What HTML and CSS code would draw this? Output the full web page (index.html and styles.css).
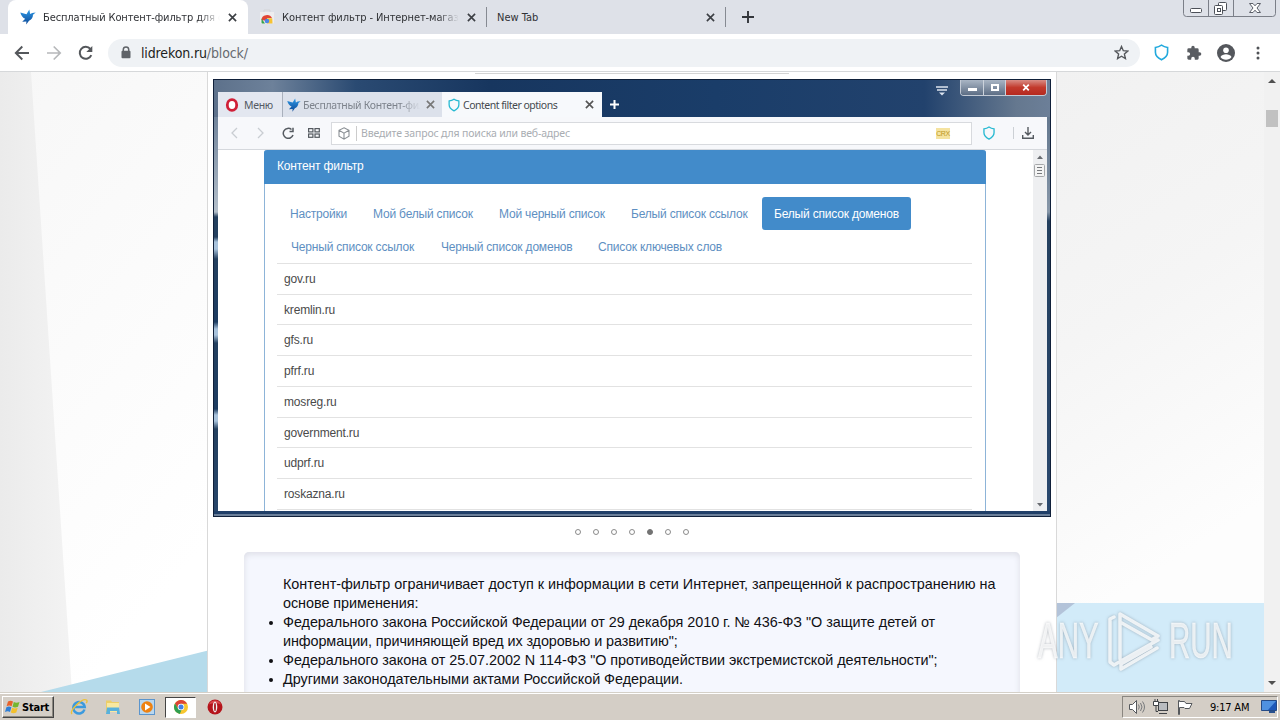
FILE: index.html
```
<!DOCTYPE html>
<html lang="ru">
<head>
<meta charset="utf-8">
<title>Бесплатный Контент-фильтр</title>
<link rel="stylesheet" href="styles.css">
</head>
<body>
<svg class="defs" width="0" height="0">
  <defs>
    <linearGradient id="birdg" x1="0" y1="0" x2="0" y2="1"><stop offset="0" stop-color="#2f9be8"/><stop offset="1" stop-color="#0b4796"/></linearGradient>
    <symbol id="bird" viewBox="0 0 16 16"><path fill="url(#birdg)" d="M.3 3.400 6.500 5.200 9.300.5l.9 4.500 2-1 3.500-.4-2.700 2.200c0 3-1.600 5-4 6L6.200 15.600l.2-3-4.200.2 3-3C3 8.800 1.200 6.600.3 3.400z"/></symbol>
    <symbol id="shield" viewBox="0 0 16 18"><path d="M8 1.200C6 2.600 4 3.300 1.500 3.600v5.200c0 3.700 2.800 6.200 6.500 8 3.700-1.800 6.500-4.300 6.500-8V3.600C12 3.300 10 2.600 8 1.200z" fill="none" stroke="currentColor" stroke-width="1.700"/></symbol>
    <symbol id="x" viewBox="0 0 10 10"><path d="M1 1 9 9M9 1 1 9" stroke="currentColor" stroke-width="1.800" fill="none"/></symbol>
    <symbol id="reload" viewBox="0 0 16 16"><path d="M13.300 10.200A6 6 0 1 1 12.400 4" fill="none" stroke="currentColor" stroke-width="2"/><path d="M14.300 1v6H8.300z" fill="currentColor"/></symbol>
  </defs>
</svg>

<header class="tabstrip">
  <div class="tab active">
    <svg class="fav" width="16" height="16"><use href="#bird"/></svg>
    <span class="tab-title t1">Бесплатный Контент-фильтр для с</span>
    <svg class="close" width="9" height="9"><use href="#x"/></svg>
  </div>
  <div class="tab second">
    <svg class="fav" width="16" height="16" viewBox="0 0 16 16"><path d="M5 3V1h6v2" fill="none" stroke="#d5d5d8"/><path d="M1 3h14v10.500a1 1 0 0 1-1 1H2a1 1 0 0 1-1-1z" fill="#eeedef"/><path d="M2.500 11A5.500 5 0 0 1 13 9H8v3z" fill="#e24535"/><path d="M2.500 9.500 6 14.500H3.500a1 1 0 0 1-1-1z" fill="#37a24c"/><path d="M8 9.200h5.200l.3 5.300H8z" fill="#f6c333"/><circle cx="8" cy="12" r="2.300" fill="#4c86e8"/></svg>
    <span class="tab-title t2">Контент фильтр - Интернет-магаз</span>
    <svg class="close" width="9" height="9"><use href="#x"/></svg>
  </div>
  <div class="tab third">
    <span class="tab-title t3">New Tab</span>
    <svg class="close" width="9" height="9"><use href="#x"/></svg>
  </div>
  <svg class="newtab" width="12" height="12" viewBox="0 0 12 12"><path d="M6 0v12M0 6h12" stroke="#33363b" stroke-width="1.900"/></svg>
  <svg class="winctl" width="94" height="18" viewBox="0 0 94 18" fill="none" stroke="#7b7f88">
    <path d="M.5 0v13.500a3 3 0 0 0 3 3h86a3 3 0 0 0 3-3V0M25.500 0v16M50.500 0v16"/>
    <rect x="7.500" y="8.500" width="11" height="4" rx="1" fill="#fff" stroke="#4c5058"/>
    <rect x="35.500" y="2.500" width="8" height="8" rx="1" fill="#fff" stroke="#4c5058"/><rect x="31.500" y="5.500" width="8" height="9" rx="1" fill="#fff" stroke="#4c5058"/><rect x="34.500" y="8.500" width="3" height="3" stroke="#4c5058"/>
    <path d="M66.500 3.500h3.500l2 2.300 2-2.300h3.500L74 8l3.500 4.500H74l-2-2.300-2 2.300h-3.500L70 8z" fill="#fff" stroke="#5b5f68"/>
  </svg>
</header>

<div class="toolbar">
  <svg class="nav-ic" width="16" height="16" viewBox="0 0 16 16" fill="none" stroke="#54575b" stroke-width="1.900"><path d="M15 8H2M8.300 1.500 1.800 8l6.500 6.500"/></svg>
  <svg class="nav-ic" width="16" height="16" viewBox="0 0 16 16" fill="none" stroke="#b6b8ba" stroke-width="1.700"><path d="M1 8h13M7.700 1.500 14.200 8l-6.500 6.500"/></svg>
  <svg class="nav-ic reload" width="16" height="16"><use href="#reload"/></svg>
  <div class="omnibox">
    <svg width="10" height="13" viewBox="0 0 10 13"><path d="M2.300 5.500V3.600a2.700 2.700 0 0 1 5.400 0v1.900" fill="none" stroke="#5f6368" stroke-width="1.500"/><rect x=".5" y="4.700" width="9" height="7.500" rx="1" fill="#5f6368"/></svg>
    <span class="url">lidrekon.ru<span>/block/</span></span>
    <svg class="star" width="15" height="15" viewBox="0 0 15 15"><path d="m7.500 1.500 1.800 4.200 4.500.4-3.400 3 1 4.400-3.900-2.300-3.900 2.300 1-4.400-3.400-3 4.500-.4z" fill="none" stroke="#54575b" stroke-width="1.400"/></svg>
  </div>
  <svg class="shield" width="15" height="17"><use href="#shield"/></svg>
  <svg class="puzzle" width="16" height="16" viewBox="0 0 24 24"><path fill="#5a5d62" d="M20.500 11H19V7a2 2 0 0 0-2-2h-4V3.500a2.500 2.500 0 0 0-5 0V5H4a2 2 0 0 0-2 2v3.800h1.500a2.700 2.700 0 0 1 0 5.400H2V20c0 1.100.9 2 2 2h3.800v-1.500a2.700 2.700 0 0 1 5.400 0V22H17a2 2 0 0 0 2-2v-4h1.500a2.500 2.500 0 0 0 0-5z"/></svg>
  <svg class="avatar" width="18" height="18" viewBox="0 0 18 18"><circle cx="9" cy="9" r="9" fill="#54575c"/><circle cx="9" cy="6.200" r="2.800" fill="#fff"/><path d="M3.500 13c.6-2 3.500-2.800 5.500-2.800s4.900.8 5.500 2.800c-1.200 1.700-3.200 2.700-5.500 2.700S4.700 14.700 3.500 13z" fill="#fff"/></svg>
  <svg class="dots" width="4" height="14" viewBox="0 0 4 14" fill="#4f5256"><circle cx="2" cy="2" r="1.500"/><circle cx="2" cy="7" r="1.500"/><circle cx="2" cy="12" r="1.500"/></svg>
</div>

<main class="viewport">
  <div class="page">
    <svg class="backdrop" width="1264" height="620" viewBox="0 72 1264 620">
      <defs>
        <linearGradient id="lg" x1="0" y1="0" x2=".4" y2="1"><stop offset="0" stop-color="#f7f7f7"/><stop offset="1" stop-color="#fff"/></linearGradient>
        <linearGradient id="gg" x1="0" y1="0" x2="1" y2="0"><stop offset="0" stop-color="#ebebeb"/><stop offset="1" stop-color="#f3f3f3"/></linearGradient>
        <linearGradient id="rg" x1="0" y1="0" x2=".25" y2="1"><stop offset="0" stop-color="#f1f1f1"/><stop offset=".5" stop-color="#f5f5f5"/><stop offset="1" stop-color="#fdfdfd"/></linearGradient>
      </defs>
      <path d="M0 72h208v620H0z" fill="url(#lg)"/>
      <path d="M0 72h31l41 620H0z" fill="url(#gg)"/>
      <path d="M41 692 208 650.500V692z" fill="#b5dbeb"/>
      <path d="M1056 72h208v531h-208z" fill="url(#rg)"/>
      <path d="M1056 603h208v89h-208z" fill="#d2ebf9"/>
      <path d="M1056 603h19l-19 15z" fill="#b3c3d9"/>
    </svg>

    <div class="column">
      <div class="topline"></div>
      <section class="slide">
        <div class="o-tabs">
          <div class="o-menu"><svg width="14" height="14" viewBox="0 0 14 14"><ellipse cx="7" cy="7" rx="4.700" ry="5.400" fill="#fff" stroke="#d01f37" stroke-width="2.800"/></svg><span>Меню</span></div>
          <div class="o-tab dim"><svg width="14" height="14"><use href="#bird"/></svg><span class="fadeout">Бесплатный Контент-фил</span><svg class="ox" width="9" height="9"><use href="#x"/></svg></div>
          <div class="o-tab cur"><svg class="teal" width="12" height="14"><use href="#shield"/></svg><span>Content filter options</span><svg class="ox" width="9" height="9"><use href="#x"/></svg></div>
          <svg class="oplus" width="9" height="9" viewBox="0 0 9 9"><path d="M4.500 0v9M0 4.500h9" stroke="#fff" stroke-width="2"/></svg>
          <svg class="omore" width="12" height="10" viewBox="0 0 12 10"><path d="M0 1h12M1 4h10" stroke="#dbe3ee" stroke-width="1.500"/><path d="M3 6.500h6L6 9.500z" fill="#dbe3ee"/></svg>
          <div class="o-win"><i class="w1"></i><i class="w2"></i><i class="w3"><svg width="8" height="7" viewBox="0 0 10 10"><path d="M1 1 9 9M9 1 1 9" stroke="#fff" stroke-width="2.500"/></svg></i></div>
        </div>
        <div class="o-bar">
          <svg width="7" height="12" viewBox="0 0 7 12" fill="none" stroke="#c9cdd2" stroke-width="1.300"><path d="M6 1 1 6l5 5"/></svg>
          <svg class="fw" width="7" height="12" viewBox="0 0 7 12" fill="none" stroke="#c9cdd2" stroke-width="1.300"><path d="m1 1 5 5-5 5"/></svg>
          <svg class="rl" width="12" height="12" viewBox="0 0 12 12" fill="none" stroke="#555a60" stroke-width="1.500"><path d="M11 8A5 5 0 1 1 9.500 2.500"/><path d="M11 .8v3.700H7.500" /></svg>
          <svg class="grid" width="12" height="10" viewBox="0 0 12 10" fill="none" stroke="#555a60" stroke-width="1.200"><rect x=".6" y=".6" width="4.300" height="3.300"/><rect x="7" y=".6" width="4.300" height="3.300"/><rect x=".6" y="6" width="4.300" height="3.300"/><rect x="7" y="6" width="4.300" height="3.300"/></svg>
          <div class="o-input">
            <svg width="12" height="13" viewBox="0 0 12 13" fill="none" stroke="#8b9095" stroke-width="1.100"><path d="m6 .8 5 2.500v6L6 12.200 1 9.300v-6zM1 3.300l5 2.900 5-2.900M6 6.200v6"/></svg>
            <span>Введите запрос для поиска или веб-адрес</span>
            <b>CRX</b>
          </div>
          <svg class="teal osh" width="14" height="14"><use href="#shield"/></svg>
          <i class="sep"></i>
          <svg class="dl" width="12" height="12" viewBox="0 0 12 12" fill="none" stroke="#555a60" stroke-width="1.400"><path d="M6 0v7.500M3 5l3 3 3-3M.7 8v3.200h10.600V8"/></svg>
        </div>
        <div class="o-page">
          <div class="panel">
            <div class="panel-head">Контент фильтр</div>
            <nav>
              <span class="n1">Настройки</span><span class="n2">Мой белый список</span><span class="n3">Мой черный список</span><span class="n4">Белый список ссылок</span><span class="n5 on">Белый список доменов</span>
            </nav>
            <nav class="row2">
              <span class="n6">Черный список ссылок</span><span class="n7">Черный список доменов</span><span class="n8">Список ключевых слов</span>
            </nav>
            <ul class="domains">
              <li>gov.ru</li><li>kremlin.ru</li><li>gfs.ru</li><li>pfrf.ru</li><li>mosreg.ru</li><li>government.ru</li><li>udprf.ru</li><li>roskazna.ru</li><li></li>
            </ul>
          </div>
          <div class="o-scroll">
            <svg width="14" height="361" viewBox="0 0 14 361"><path d="M4 9h6L7 5.500zM4 353h6l-3 3.500z" fill="#6a6d72"/><rect x="1.500" y="14.500" width="10" height="12" rx="1" fill="#f4f4f4" stroke="#a6a8aa"/><path d="M4 17.500h5M4 20.500h5M4 23.500h5" stroke="#77797c"/></svg>
          </div>
        </div>
      </section>
      <div class="pager"><i></i><i></i><i></i><i></i><i class="on"></i><i></i><i></i></div>
      <section class="info">
        <p class="l1">Контент-фильтр ограничивает доступ к информации в сети Интернет, запрещенной к распространению на</p>
        <p class="l2">основе применения:</p>
        <p class="l3 li">Федерального закона Российской Федерации от 29 декабря 2010 г. № 436-ФЗ "О защите детей от</p>
        <p class="l4">информации, причиняющей вред их здоровью и развитию";</p>
        <p class="l5 li">Федерального закона от 25.07.2002 N 114-ФЗ "О противодействии экстремистской деятельности";</p>
        <p class="l6 li">Другими законодательными актами Российской Федерации.</p>
      </section>
    </div>

    <div class="watermark">
      <span>ANY</span>
      <svg width="56" height="64" viewBox="0 0 56 64" fill="none" stroke="#fff" stroke-opacity=".8" stroke-width="3.500" stroke-linejoin="round" stroke-linecap="round"><path d="M13 50V5l38 22-5 3M13 13l32 18M7 8 3 10v43l4 3 44-25M14 60l36-21M14 60v-5l30-17"/></svg>
      <span>RUN</span>
    </div>
  </div>
  <div class="scrollbar"><i class="up"></i><i class="thumb"></i><i class="down"></i></div>
</main>

<footer class="taskbar">
  <div class="start">
    <svg width="16" height="16" viewBox="0 0 16 16"><path d="M3 2.500C5 1.200 6.500 1.500 8 2.500L6.600 7.300C5 6.300 3.500 6.300 1.600 7.300z" fill="#e8622a"/><path d="M8.800 3c1.800 1 3.500 1 5.700 0L13 7.800c-2 1-3.700 1-5.500 0z" fill="#75b62f"/><path d="M1.400 8.200c2-1 3.500-.8 5 .1L5 13C3.500 12 2 12 0 13z" fill="#2f7fd6"/><path d="M7.200 8.800c1.800 1 3.500 1 5.500 0l-1.400 4.800c-2 1-3.700 1-5.500 0z" fill="#f3c02c"/></svg>
    <span>Start</span>
  </div>
  <div class="apps">
    <svg width="18" height="18" viewBox="0 0 18 18"><path d="M14.500 11.500A5.700 5.700 0 1 1 14.700 9H5" fill="none" stroke="#3b9ade" stroke-width="2.500"/><path d="M2 16C-1 13 12-.5 16.500 2c.8.600.4 2.200-.3 3.200" fill="none" stroke="#ecc138" stroke-width="1.400"/></svg>
    <svg width="18" height="18" viewBox="0 0 18 18"><path d="M2 2.500h5l1 1.500h7v10H2z" fill="#ecce68"/><path d="M3 5h12v9H3z" fill="#f8e8a0"/><path d="M3 9.500h12l1 6.500h-3v-3H6v3H2z" fill="#58b1dc"/></svg>
    <svg width="18" height="18" viewBox="0 0 18 18"><rect x="1.500" y="1.500" width="15" height="15" fill="#b9d7ef" stroke="#5b95cd"/><circle cx="9" cy="9" r="5.800" fill="#ee8212"/><path d="m7 5.500 5.500 3.500L7 12.500z" fill="#fff"/></svg>
    <div class="chrome"><svg width="14" height="14" viewBox="0 0 14 14"><circle cx="7" cy="7" r="7" fill="#f7c62f"/><path d="M1 3.500A7 7 0 0 1 13.100 3.700H7L4 8.500z" fill="#dd4336"/><path d="M1 3.400 4.300 9 7.500 10 5.800 13.900A7 7 0 0 1 1 3.400z" fill="#2f9e51"/><circle cx="7" cy="7" r="3.300" fill="#fff"/><circle cx="7" cy="7" r="2.500" fill="#437fe6"/></svg></div>
    <svg class="opera" width="16" height="16" viewBox="0 0 16 16"><circle cx="8" cy="8" r="7.500" fill="#b5141b"/><path d="M2 5.500A6.500 6.500 0 0 1 14 5.500C11 3.800 5 3.800 2 5.500z" fill="#d9484d"/><ellipse cx="8" cy="8" rx="2.300" ry="5.400" fill="#f2f2f2"/><ellipse cx="8" cy="8" rx=".9" ry="4.200" fill="#a30f15"/></svg>
  </div>
  <div class="tray">
    <svg width="16" height="14" viewBox="0 0 16 14" fill="none" stroke="#55585c"><path d="M.5 4.500h3l4-4v13l-4-4h-3z" fill="#fff"/><path d="M9.500 4.500q1.500 2.500 0 5M11.500 3q3 4 0 8M13.500 1.500q4 5.500 0 11" stroke="#77797c"/></svg>
    <svg width="16" height="16" viewBox="0 0 16 16" fill="none" stroke="#3f4246"><rect x="5.500" y="3.500" width="9" height="8" fill="#b9bcc0"/><path d="M.5 2.500h5v4h-5z" fill="#fff"/><path d="M2 0v2M4.500 0v2M3 6.500v6h2M6 14.500h8"/></svg>
    <svg width="16" height="15" viewBox="0 0 16 15" fill="#fff" stroke="#55585c"><path d="M1.500 14.500v-14h1v1h5l1.500 2h6l-2.500 5H8l-1-1H2.500v7z"/></svg>
    <span>9:17 AM</span>
    <svg width="16" height="14" viewBox="0 0 16 14"><path d="M.5.500h15v10H.5z" fill="#1d58b9" stroke="#254b86"/><path d="M1 1h14L7 10H1z" fill="#4f91e0"/><path d="M8 11h6v2H8z" fill="#27508e"/></svg>
  </div>
</footer>
</body>
</html>
```
FILE: styles.css
```
* { box-sizing: border-box; }
body {
  margin: 0; width: 1280px; height: 720px; overflow: hidden;
  display: flex; flex-direction: column; background: #fff;
  font-family: "DejaVu Sans Condensed", "DejaVu Sans", sans-serif; color: #222;
}
svg { display: block; flex: none; }
.defs { position: absolute; }
p, ul { margin: 0; padding: 0; }
span { white-space: nowrap; }

/* tab strip */
.tabstrip { height: 34px; background: #dee1e8; display: flex; position: relative; padding-left: 8px; flex: none; }
.tab { display: flex; align-items: center; height: 34px; font-size: 11px; }
.tab.active { width: 240px; background: #fff; border-radius: 8px 8px 0 0; padding-left: 12px; }
.tab.second { width: 238px; padding-left: 11px; }
.tab.third { width: 240px; padding-left: 10px; border-left: 1px solid #868a92; border-right: 1px solid #868a92; height: 20px; margin-top: 7px; }
.fav { margin-right: 7px; }
.tab-title { color: #303236; flex: none; }
.t1, .t2 { width: 177px; -webkit-mask-image: linear-gradient(90deg, #000 88%, transparent); mask-image: linear-gradient(90deg, #000 88%, transparent); }
.t1 { letter-spacing: -.12px; }
.t2 { letter-spacing: -.1px; }
.t3 { width: 209px; }
.close { color: #3c3f44; margin-left: 8px; }
.t3 + .close { margin-left: 0; }
.newtab { margin: 11px 0 0 16px; }
.winctl { position: absolute; right: 3px; top: 0; }

/* toolbar */
.toolbar { height: 38px; flex: none; display: flex; align-items: center; padding-left: 14px; border-bottom: 1px solid #d6d8da; }
.nav-ic { margin-right: 16px; }
.reload { color: #54575b; margin-right: 14px; }
.omnibox { width: 1032px; height: 28px; border-radius: 14px; background: #eff2f5; display: flex; align-items: center; padding: 0 11px 0 13px; }
.url { font: 14px "DejaVu Sans Condensed", sans-serif; letter-spacing: -.13px; margin-left: 10px; color: #1c1e21; }
.url span { color: #666a6f; }
.star { margin-left: auto; }
.shield { color: #22a9dd; margin-left: 14px; }
.puzzle { margin-left: 17px; }
.avatar { margin-left: 15px; }
.dots { margin-left: 21px; }

/* viewport */
.viewport { height: 620px; flex: none; display: flex; overflow: hidden; }
.page { width: 1264px; position: relative; overflow: hidden; display: flex; justify-content: center; }
.backdrop { position: absolute; left: 0; top: 0; }
.column { position: relative; width: 850px; height: 620px; background: #fff; border: solid #d9d9d9; border-width: 0 1px; display: flex; flex-direction: column; align-items: center; }
.topline { width: 314px; height: 2px; border-bottom: 1px solid #d4d4d4; margin-bottom: 5px; flex: none; }
.scrollbar { width: 16px; background: #f1f1f1; display: flex; flex-direction: column; align-items: center; }
.up { border: 4px solid transparent; border-bottom-color: #505050; border-top: 0; margin-top: 7px; }
.thumb { width: 12px; height: 17px; background: #c1c1c1; margin-top: 27px; }
.down { border: 4px solid transparent; border-top-color: #505050; border-bottom: 0; margin-top: auto; margin-bottom: 7px; }

/* slide: nested browser window */
.slide {
  width: 838px; height: 438px; flex: none; overflow: hidden; border: 1px solid #10203a;
  padding: 0 3px 5px 4px; display: flex; flex-direction: column;
  background:
    linear-gradient(90deg, #5d718b 0, #6d819a 7%, #2a4a72 17%, #17365f 33%, #1a3d69 60%, #22426d 85%, #65788f 96%, #6c7f98) 0 0 / 100% 37px no-repeat,
    linear-gradient(#203f68 0 3px, #6b7f99 3px) 0 100% / 100% 5px no-repeat,
    linear-gradient(#71849b 0, #b4bfca 95px, #24405f 100px, #24405f 120px, #a9c3dc 125px, #a9c3dc 132px, #24405f 142px, #1d3c61 205px, #a9c3dc 212px, #a9c3dc 218px, #24405f 226px, #1d3c61 292px, #a9c3dc 298px, #a9c3dc 304px, #24405f 312px, #29486f) 0 37px / 4px 100% no-repeat,
    linear-gradient(#64788f 0, #8696a8 95px, #24405f 104px, #29486f) 100% 37px / 3px 100% no-repeat;
  font-family: "Noto Sans", "Open Sans", sans-serif;
}
.o-tabs { height: 37px; flex: none; display: flex; align-items: flex-end; font-size: 10.500px; color: #555b64; }
.o-menu { width: 64px; height: 25px; background: #e3e7f0; display: flex; align-items: center; padding-left: 7px; gap: 5px; letter-spacing: -.3px; }
.o-tab { height: 25px; display: flex; align-items: center; padding-left: 4px; gap: 2px; letter-spacing: -.4px; }
.dim { width: 160px; background: #dce1eb; border-left: 1px solid #a9b0bc; color: #7d838c; }
.fadeout { width: 121px; letter-spacing: -.32px; -webkit-mask-image: linear-gradient(90deg, #000 80%, transparent 97%); mask-image: linear-gradient(90deg, #000 80%, transparent 97%); }
.cur { width: 160px; background: #f7f9fc; color: #44494f; padding-left: 6px; }
.cur span { letter-spacing: -.5px; margin-left: 1px; }
.cur .ox { margin-left: auto; margin-right: 8px; color: #555; }
.dim .ox { margin-left: 0; color: #777; }
.teal { color: #26b9d1; }
.oplus { margin: 0 0 8px 8px; }
.omore { margin: 0 0 21px 317px; }
.o-win { align-self: flex-start; margin-left: 12px; display: flex; height: 16px; width: 87px; border: 1px solid #c3cad5; border-top: 0; border-radius: 0 0 4px 4px; overflow: hidden; }
.o-win i { display: flex; align-items: center; justify-content: center; background: linear-gradient(#a9b5c4, #5d6e85); }
.w1 { width: 23px; border-right: 1px solid #ccd3dc; }
.w1::before { content: ""; width: 9px; height: 3px; background: #fff; margin-top: 4px; }
.w2 { width: 22px; border-right: 1px solid #ccd3dc; }
.w2::before { content: ""; width: 8px; height: 7px; border: 2px solid #fff; box-sizing: border-box; }
.o-win .w3 { flex: 1; background: linear-gradient(#d98d85, #c23a2c 50%, #b52a20); }
.o-bar { height: 33px; flex: none; background: #f7f8fb; border-bottom: 1px solid #d5d8dd; display: flex; align-items: center; padding-left: 13px; }
.fw { margin-left: 19px; }
.rl { margin-left: 18px; }
.grid { margin-left: 14px; }
.o-input { width: 641px; height: 23px; margin-left: 11px; background: #fff; border: 1px solid #d8dade; display: flex; align-items: center; padding-left: 6px; }
.o-input span { font-size: 10.500px; letter-spacing: -.16px; color: #a9adb2; border-left: 1px solid #ccc; padding-left: 4px; margin-left: 6px; line-height: 15px; }
.o-input b { margin-left: auto; margin-right: 21px; width: 14px; height: 11px; background: #f5e3a0; color: #bd9720; font: 7px/11px "Liberation Sans", sans-serif; text-align: center; letter-spacing: -.4px; }
.osh { margin-left: 10px; }
.sep { width: 1px; height: 12px; background: #ccd0d5; margin-left: 17px; }
.dl { margin-left: 8px; }
.o-page { flex: 1; min-height: 0; background: #fff; display: flex; overflow: hidden; }
.panel { width: 722px; margin-left: 46px; border: solid #8db4d8; border-width: 0 1px; border-radius: 3px 3px 0 0; font-family: "Liberation Sans", Arial, sans-serif; font-size: 12px; letter-spacing: -.17px; }
.panel-head { height: 34px; margin: 0 -1px 13px; background: #428bca; border-radius: 3px 3px 0 0; color: #fff; padding-left: 13px; line-height: 33px; }
nav { display: flex; height: 33px; padding-left: 13px; color: #5e8fc2; line-height: 34px; }
nav span { padding-left: 12px; flex: none; letter-spacing: -.19px; }
.n1 { width: 83px; } .n2 { width: 126px; } .n3 { width: 132px; } .n4 { width: 143px; } .n5 { width: 149px; }
.n6 { width: 150px; } .n7 { width: 157px; }
.on { border-radius: 3px; }
nav .on { background: #428bca; color: #fff; }
.row2 { padding-left: 14px; }
.domains { list-style: none; margin: 0 13px 0 12px; color: #4a4a4a; }
.domains li { height: 30.720px; border-top: 1px solid #e2e2e2; padding-left: 7px; line-height: 31px; }
.o-scroll { width: 14px; margin-left: auto; background: #eeeff1; }

.pager { display: flex; gap: 12px; margin-top: 12px; }
.pager i { width: 6px; height: 6px; border: 1px solid #8b8b8b; border-radius: 50%; }
.pager .on { background: #737373; border-color: #737373; border-radius: 50%; }

.info { width: 776px; height: 170px; flex: none; margin-top: 17px; background: #f5f7fe; border-radius: 5px 5px 0 0; box-shadow: inset 0 2px 6px #dcdde5; padding: 23px 0 0 39px; font: 14.400px/19px "Liberation Sans", Arial, sans-serif; letter-spacing: -.04px; color: #101014; }
.info p { white-space: nowrap; }
.info .l1 { letter-spacing: -.01px; }
.info .l4 { letter-spacing: -.1px; }
.li { display: flex; align-items: center; }
.li::before { content: ""; width: 4px; height: 4px; border-radius: 50%; background: #101014; margin: 0 10px 0 -14px; }

.watermark { position: absolute; left: 1038px; top: 537px; display: flex; align-items: center; gap: 6px; height: 64px; filter: drop-shadow(0 0 1.500px rgba(90,100,115,.55)); }
.watermark span { font: 50px/68px "Liberation Sans", sans-serif; color: rgba(255,255,255,.75); -webkit-text-stroke: .8px rgba(255,255,255,.5); width: 63px; transform: scaleX(.59); transform-origin: 0 50%; }

/* taskbar */
.taskbar { height: 28px; flex: none; background: #d4cec6; border-top: 1px solid #d4d0c8; box-shadow: inset 0 1px #fff; display: flex; align-items: center; padding-top: 1px; }
.start { width: 52px; height: 22px; margin-left: 2px; border: 1px solid; border-color: #fff #444 #444 #fff; box-shadow: inset -1px -1px #8c8880; display: flex; align-items: center; padding-left: 2px; font: bold 11px "DejaVu Sans Condensed", sans-serif; color: #000; }
.start span { letter-spacing: -.2px; margin-left: 1px; }
.apps { display: flex; align-items: center; margin-left: 16px; gap: 16px; }
.chrome { width: 31px; height: 21px; background: #fff; border: 1px solid; border-color: #444 #fff #fff #444; display: flex; align-items: center; justify-content: center; margin-left: -7px; }
.opera { margin-left: -5px; }
.tray { margin-left: auto; margin-right: 2px; width: 156px; height: 22px; border: 1px solid; border-color: #8a8680 #fff #fff #8a8680; display: flex; align-items: center; padding-left: 6px; gap: 8px; font-size: 11px; color: #000; }
.tray span { margin: 0 2px 0 9px; width: 41px; letter-spacing: -.2px; }
```
